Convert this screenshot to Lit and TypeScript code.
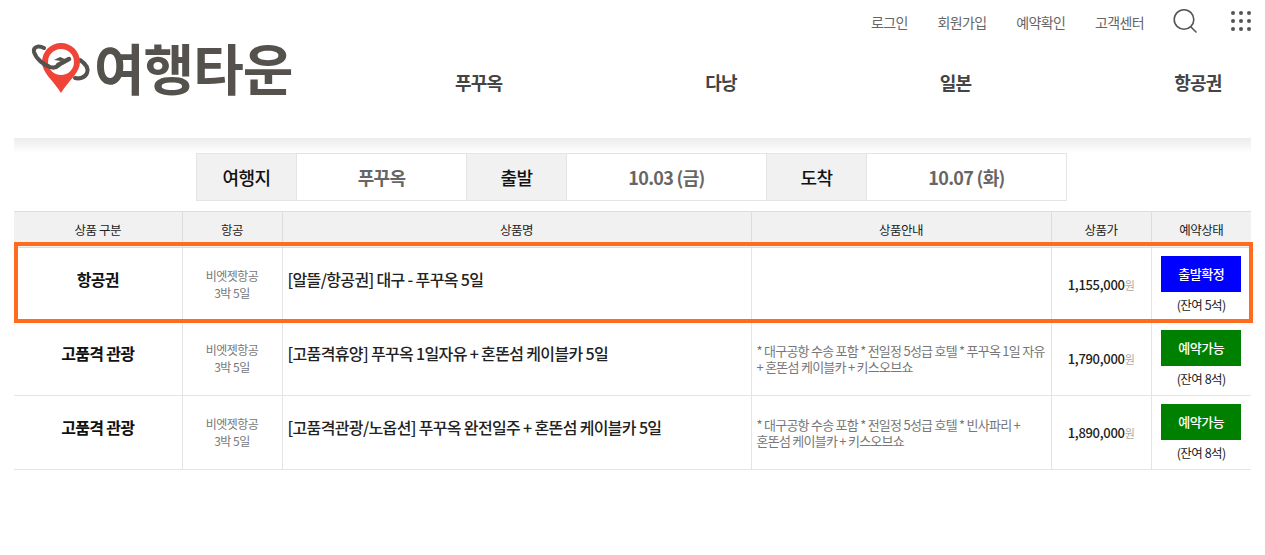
import { LitElement, html, css, svg } from "lit";
import { customElement } from "lit/decorators.js";

interface Row { cat: string; title: string; info: string; price: string; status: string; kind: string; seats: string; }

const rows: Row[] = [
  { cat: "항공권", title: "[알뜰/항공권] 대구 - 푸꾸옥 5일", info: "", price: "1,155,000", status: "출발확정", kind: "blue", seats: "(잔여 5석)" },
  { cat: "고품격 관광", title: "[고품격휴양] 푸꾸옥 1일자유 + 혼똔섬 케이블카 5일", info: "* 대구공항 수송 포함 * 전일정 5성급 호텔 * 푸꾸옥 1일 자유 + 혼똔섬 케이블카 + 키스오브쇼", price: "1,790,000", status: "예약가능", kind: "green", seats: "(잔여 8석)" },
  { cat: "고품격 관광", title: "[고품격관광/노옵션] 푸꾸옥 완전일주 + 혼똔섬 케이블카 5일", info: "* 대구공항 수송 포함 * 전일정 5성급 호텔 * 빈사파리 + 혼똔섬 케이블카 + 키스오브쇼", price: "1,890,000", status: "예약가능", kind: "green", seats: "(잔여 8석)" },
];

const logo = svg`<svg class="mark" width="64" height="60" viewBox="0 0 64 60">
  <path d="M50 20C56 24 59 28 57 33C55 38 49 39 45 38" fill="none" stroke="#55524e" stroke-width="4" stroke-linecap="round"/>
  <path d="M31 3a19 19 0 0 1 19 19c0 11-12 19-19 31c-7-12-19-20-19-31a19 19 0 0 1 19-19z" fill="#f04438"/>
  <circle cx="31" cy="22" r="13" fill="#fff"/>
  <path d="M14 8C8 5 3 7 4 12C6 19 14 25 20 27C24 28.500 27 27 29 25" fill="none" stroke="#55524e" stroke-width="4" stroke-linecap="round"/>
  <path d="M28 25L39 19" fill="none" stroke="#55524e" stroke-width="4.500" stroke-linecap="round"/>
  <path d="M24 20l7 1l4-2l-5-2z" fill="#55524e"/>
</svg>`;

@customElement("app-root")
export class AppRoot extends LitElement {
  static styles = css`
    :host { display: block; width: 1265px; height: 555px; overflow: hidden; background: #fff; color: #222;
      font-family: "Noto Sans CJK KR", "Noto Sans", sans-serif; letter-spacing: -0.5px; }
    .stage { position: relative; }
    .header { height: 138px; display: flex; flex-direction: column; padding: 0 14px; box-sizing: border-box; position: relative; }
    .top { display: flex; justify-content: flex-end; align-items: center; height: 44px; }
    .top a { font-size: 14px; color: #666; margin-left: 29.600px; line-height: 44px; letter-spacing: -0.6px; }
    .top a:first-child { margin-left: 0; }
    .search { margin-left: 29px; margin-top: -2px; display: block; }
    .dots { margin: -2px -1px 0 31px; display: block; }
    .logo { position: absolute; left: 27px; top: 42px; display: flex; align-items: center; }
    .mark { position: absolute; left: 3px; top: -2px; }
    .logo-text { margin-left: 67px; font-size: 55px; line-height: 54px; font-weight: 700; color: #55524e; letter-spacing: -1px; white-space: nowrap; margin-top: -3px; }
    .nav { display: flex; margin-left: 441px; margin-top: 13px; height: 50px; align-items: center; gap: 203px; }
    .nav a { font-size: 18px; font-weight: 700; color: #444; line-height: 50px; letter-spacing: -0.8px; }
    .shade { margin: 0 14px; height: 15px; background: linear-gradient(#ececec, #fff); }
    .summary { display: grid; grid-template-columns: 100px 170px 100px 200px 100px 199px; margin-left: 196px; width: 871px; box-sizing: border-box; border: 1px solid #e4e4e4; height: 48px; }
    .summary div { display: flex; align-items: center; justify-content: center; font-size: 18px; font-weight: 500; border-right: 1px solid #e4e4e4; box-sizing: border-box; }
    .summary div:last-child { border-right: 0; }
    .summary .k { background: #f1f1f1; color: #111; }
    .summary .v { color: #666; font-weight: 700; letter-spacing: -0.7px; }
    table { border-collapse: collapse; table-layout: fixed; width: 1237px; margin: 10px 14px 0; }
    th { height: 35px; background: #f1f1f1; font-size: 12.500px; font-weight: 400; color: #222; border: 1px solid #ddd; padding: 0; }
    td { box-sizing: border-box; height: 74px; border: 1px solid #e4e4e4; padding: 0; text-align: center; }
    th:first-child, td:first-child { border-left: 0; }
    th:last-child, td:last-child { border-right: 0; }
    td.cat { font-size: 16px; font-weight: 700; color: #111; padding-bottom: 12px; letter-spacing: -0.7px; }
    td.air { font-size: 12px; line-height: 17px; color: #777; padding-bottom: 2px; }
    td.title { text-align: left; padding: 0 0 12px 5px; font-size: 16px; font-weight: 500; color: #222; letter-spacing: -0.65px; }
    td.info { text-align: left; padding: 0 3px 0 5px; font-size: 13px; line-height: 16px; color: #777; letter-spacing: -0.75px; word-break: keep-all; }
    td.cost { padding-bottom: 4px; }
    .price { font-size: 13px; font-weight: 500; color: #222; letter-spacing: -0.3px; }
    .won { font-size: 11px; font-weight: 400; color: #aaa; }
    .btn { width: 80px; height: 36px; margin: 0 auto; display: flex; align-items: center; justify-content: center; font-size: 13px; font-weight: 500; color: #fff; }
    .blue { background: #0000ff; }
    .green { background: #008000; }
    .seats { font-size: 12.500px; line-height: 17px; margin-top: 4px; color: #222; }
    td.state { padding-bottom: 1px; }
    .picked { position: absolute; left: 14px; top: 242px; width: 1239px; height: 81px; box-sizing: border-box; border: 4px solid #ff6b1f; pointer-events: none; }
  `;

  render() {
    return html`
      <div class="stage">
        <header class="header">
          <div class="top">
            <a>로그인</a><a>회원가입</a><a>예약확인</a><a>고객센터</a>
            <svg class="search" width="26" height="26" viewBox="0 0 26 26" fill="none" stroke="#555" stroke-width="1.600">
              <circle cx="11" cy="11.500" r="9.800"/><path d="M18 19l5 5" stroke-linecap="round"/>
            </svg>
            <svg class="dots" width="22" height="22" viewBox="0 0 22 22" fill="#555">
              ${[3, 11, 19].flatMap((y) => [3, 11, 19].map((x) => svg`<circle cx=${x} cy=${y} r="2"/>`))}
            </svg>
          </div>
          <div class="logo">${logo}<span class="logo-text">여행타운</span></div>
          <nav class="nav"><a>푸꾸옥</a><a>다낭</a><a>일본</a><a>항공권</a></nav>
        </header>
        <div class="shade"></div>
        <div class="summary">
          <div class="k">여행지</div><div class="v">푸꾸옥</div>
          <div class="k">출발</div><div class="v">10.03 (금)</div>
          <div class="k">도착</div><div class="v">10.07 (화)</div>
        </div>
        <table>
          <colgroup><col style="width:168px"/><col style="width:100px"/><col style="width:469px"/><col style="width:300px"/><col style="width:100px"/><col style="width:100px"/></colgroup>
          <thead><tr><th>상품 구분</th><th>항공</th><th>상품명</th><th>상품안내</th><th>상품가</th><th>예약상태</th></tr></thead>
          <tbody>
            ${rows.map((r) => html`<tr>
              <td class="cat">${r.cat}</td>
              <td class="air">비엣젯항공<br/>3박 5일</td>
              <td class="title">${r.title}</td>
              <td class="info">${r.info}</td>
              <td class="cost"><span class="price">${r.price}</span><span class="won">원</span></td>
              <td class="state"><div class="btn ${r.kind}">${r.status}</div><div class="seats">${r.seats}</div></td>
            </tr>`)}
          </tbody>
        </table>
        <div class="picked"></div>
      </div>
    `;
  }
}
